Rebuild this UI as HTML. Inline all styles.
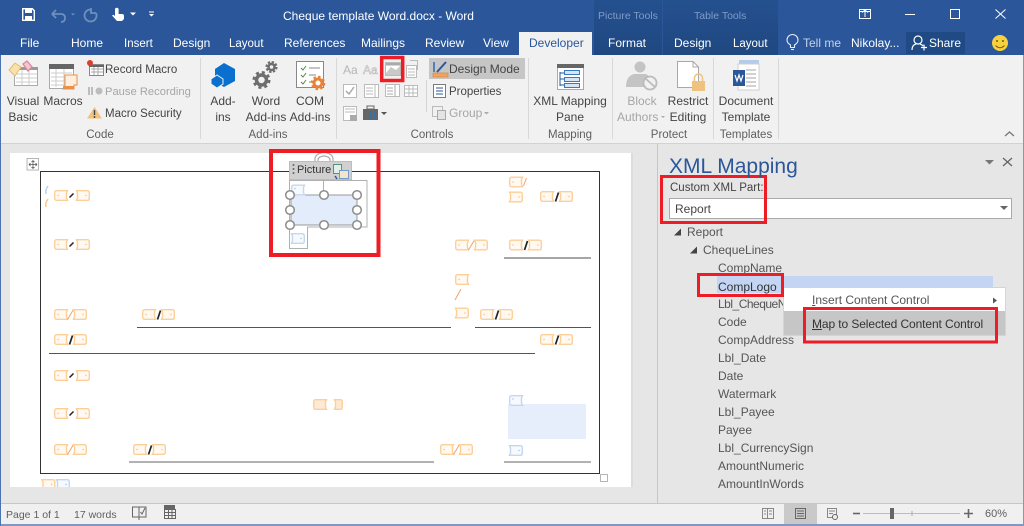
<!DOCTYPE html>
<html><head><meta charset="utf-8"><style>
html,body{margin:0;padding:0}
body{width:1024px;height:526px;overflow:hidden;background:#e6e6e6}
#w{position:relative;width:1024px;height:526px;overflow:hidden;background:#e6e6e6;font-family:"Liberation Sans",sans-serif;font-size:12px;color:#444;filter:blur(.35px)}
.b{position:absolute}
.t{position:absolute;white-space:nowrap;line-height:16px}
.w{color:#fff}
.c{text-align:center;transform:translateX(-50%)}
.g{color:#a6a6a6}
.n{color:#5f5f5f}
.s{font-size:11.5px;margin-top:1px}
.tr{color:#555;font-size:12px}
svg{position:absolute;left:0;top:0}
</style></head><body><div id="w">
<div class="b" style="left:0;top:0;width:1024px;height:55px;background:#2b579a"></div>
<div class="b" style="left:594px;top:0;width:68px;height:55px;background:linear-gradient(#25508f,#1f4880)"></div>
<div class="b" style="left:663px;top:0;width:115px;height:55px;background:linear-gradient(#25508f,#1f4880)"></div>
<div class="b" style="left:519px;top:32px;width:73px;height:23px;background:#f1f1f1"></div>
<div class="b" style="left:906px;top:32px;width:59px;height:22px;background:#1f4a84"></div>
<div class="b" style="left:0;top:55px;width:1024px;height:88px;background:#f1f1f1"></div>
<div class="b" style="left:0;top:143px;width:1024px;height:1px;background:#d2d2d2"></div>
<div class="b" style="left:429px;top:58px;width:96px;height:21px;background:#c6c6c6"></div>
<div class="b" style="left:10px;top:153px;width:621px;height:334px;background:#fff"></div>
<div class="b" style="left:631px;top:153px;width:2px;height:334px;background:#dcdcdc"></div>
<div class="b" style="left:657px;top:144px;width:1px;height:359px;background:#c6c6c6"></div>
<div class="b" style="left:508px;top:404px;width:78px;height:35px;background:#e6eefb"></div>
<div class="b" style="left:669px;top:198px;width:341px;height:19px;background:#fff;border:1px solid #ababab"></div>
<div class="b" style="left:717px;top:276px;width:276px;height:17px;background:#c3d5f2"></div>

<div class="t tr" style="left:687px;top:224px">Report</div>
<div class="t tr" style="left:703px;top:242px">ChequeLines</div>
<div class="t tr" style="left:718px;top:260px">CompName</div>
<div class="t tr" style="left:718px;top:279px;color:#333">CompLogo</div>
<div class="t tr" style="left:718px;top:296px;letter-spacing:-.5px">Lbl_ChequeN</div>
<div class="t tr" style="left:718px;top:314px">Code</div>
<div class="t tr" style="left:718px;top:332px">CompAddress</div>
<div class="t tr" style="left:718px;top:350px">Lbl_Date</div>
<div class="t tr" style="left:718px;top:368px">Date</div>
<div class="t tr" style="left:718px;top:386px">Watermark</div>
<div class="t tr" style="left:718px;top:404px">Lbl_Payee</div>
<div class="t tr" style="left:718px;top:422px">Payee</div>
<div class="t tr" style="left:718px;top:440px">Lbl_CurrencySign</div>
<div class="t tr" style="left:718px;top:458px">AmountNumeric</div>
<div class="t tr" style="left:718px;top:476px">AmountInWords</div>

<div class="b" style="left:783px;top:287px;width:223px;height:49px;background:#fff;border:1px solid #d4d4d4;box-sizing:border-box"></div>
<div class="b" style="left:784px;top:311px;width:221px;height:24px;background:#c6c6c6"></div>
<div class="b" style="left:0;top:503px;width:1024px;height:1px;background:#c6c6c6"></div>
<div class="b" style="left:0;top:504px;width:1024px;height:20px;background:#f0f0f0"></div>
<div class="b" style="left:784px;top:504px;width:33px;height:20px;background:#c9c9c9"></div>
<div class="b" style="left:0;top:524px;width:1024px;height:2px;background:#7f99c0"></div>
<div class="b" style="left:0;top:55px;width:1px;height:471px;background:#4a74b0"></div>
<div class="b" style="left:1023px;top:55px;width:1px;height:471px;background:#7f99c0"></div>

<svg width="1024" height="526" viewBox="0 0 1024 526" fill="none">
<defs>
<g id="L"><path d="M2.500 .7H13.500L12.500 3V8L13.500 10.300H2.500Q.7 10.300 .7 8V3Q.7 .7 2.500 .7Z" fill="#fff9f1" stroke="#fccf99" stroke-width="1.400"/><circle cx="4" cy="5.500" r=".7" fill="#f8bd80"/></g>
<g id="R"><path d="M.5 .7H11.500Q13.300 .7 13.300 3V8Q13.300 10.300 11.500 10.300H.5L1.500 8V3Z" fill="#fff9f1" stroke="#fccf99" stroke-width="1.400"/><circle cx="10" cy="5.500" r=".7" fill="#f8bd80"/></g>
<g id="BL"><path d="M2.500 .7H13.500L12.500 3V8L13.500 10.300H2.500Q.7 10.300 .7 8V3Q.7 .7 2.500 .7Z" fill="#f6f9fe" stroke="#c3d7ee" stroke-width="1.400"/><circle cx="4" cy="4" r=".7" fill="#9fbde0"/></g>
<g id="BR"><path d="M.5 .7H11.500Q13.300 .7 13.300 3V8Q13.300 10.300 11.500 10.300H.5L1.500 8V3Z" fill="#f6f9fe" stroke="#c3d7ee" stroke-width="1.400"/><circle cx="10" cy="5.500" r=".7" fill="#9fbde0"/></g>
<g id="P"><use href="#L"/><path d="M15.500 7.500L19.500 3.500" stroke="#222" stroke-width="1.500"/><use href="#R" x="22"/></g>
<g id="D"><use href="#L"/><path d="M15.500 10.500L18.500 1.500" stroke="#222" stroke-width="1.700"/><use href="#R" x="19"/></g>
<g id="O"><use href="#L"/><path d="M13.500 10.500L19.500 .5" stroke="#f3a06c" stroke-width="1"/><use href="#R" x="19"/></g>
<circle id="H" r="4.300" fill="#fff" stroke="#8c8c8c" stroke-width="1.500"/>
</defs>

<!-- QAT -->
<g stroke="#fff" stroke-width="1.400"><path d="M22.700 8.700H32.300L34.300 10.700V20.300H22.700Z"/></g><rect x="25" y="9" width="7" height="4" fill="#fff"/><rect x="25" y="16" width="7" height="4" fill="#fff"/>
<path d="M52 14L56 10M52 14L56 18M52 14H61Q65 14 65 18T61 22" stroke="#6f8fbd" stroke-width="1.800"/><path d="M71 13.500H75L73 15.500Z" fill="#6f8fbd"/>
<path d="M91 9.500A6 6 0 1 0 96 13M91 8V13H96" stroke="#6f8fbd" stroke-width="1.800"/>
<path d="M115 9.500a1.800 1.800 0 0 1 3.600 0V14H122Q124 14 124 16V19L122 21H117L112 15.500L113.500 14.800L115 16Z" fill="#fff"/>
<path d="M130 12.500H136L133 15.500Z" fill="#fff"/>
<path d="M149 12H154" stroke="#fff"/><path d="M149 14H154L151.500 16.500Z" fill="#fff"/>
<!-- window controls -->
<g stroke="#fff" stroke-width="1"><rect x="859.500" y="9.500" width="11" height="9"/><path d="M862 12.500L865 10L868 12.500M865 10V17M859.500 11.500H870.500"/><path d="M905 14.500H915"/><rect x="950.500" y="9.500" width="9" height="9"/><path d="M995.500 9.500L1005.500 18.500M1005.500 9.500L995.500 18.500"/></g>
<!-- bulb -->
<g stroke="#e5ecf6" stroke-width="1.100"><path d="M790.500 47.500V45Q787 43 787 40A5.500 5.500 0 0 1 798 40Q798 43 794.500 45V47.500Z"/><path d="M791 49.500H794"/></g>
<!-- share -->
<g stroke="#fff" stroke-width="1.200"><circle cx="918" cy="40" r="4"/><path d="M912 50Q912 45 916 44M920 44Q922 44.500 923 46M921 47.500H927M924 44.500V50.500"/></g>
<circle cx="1000" cy="43" r="8" fill="#f7d23e"/><circle cx="997" cy="41" r="1" fill="#7a5a10"/><circle cx="1003" cy="41" r="1" fill="#7a5a10"/><path d="M995.500 45.500Q1000 50 1004.500 45.500" stroke="#7a5a10"/>

<!-- Visual Basic -->
<rect x="14.500" y="67.500" width="23" height="18" fill="#fff" stroke="#aaa"/><rect x="14" y="67" width="24" height="3" fill="#999"/>
<path d="M16 74H37M16 78H37M16 82H37M22 70V85M29 70V85" stroke="#ccc"/>
<path d="M9 70L15 63L21 67L15 76Z" fill="#f6e2ac" stroke="#e6bc6b"/><path d="M23 64L27 61L32 67L28 71Z" fill="#f6c4cf" stroke="#d88a9e" stroke-width="1.300"/>
<!-- Macros -->
<rect x="49.500" y="64.500" width="24" height="24" fill="#fff" stroke="#aaa"/><rect x="49" y="64" width="25" height="5" fill="#666"/>
<path d="M51 73H72M51 77H72M51 81H72M51 85H64M56 69V87M64 69V87" stroke="#ccc"/>
<path d="M65 75H77V85H74V89H63L65 85Z" fill="#fdeedd" stroke="#e8914a"/><rect x="63" y="86" width="11" height="3" fill="#e8914a"/>
<!-- Record macro etc -->
<rect x="89.500" y="64.500" width="14" height="11" fill="#fff" stroke="#888"/><path d="M89 66H104" stroke="#666" stroke-width="2"/><path d="M91 69H103M91 72H103M94 67V75M98 67V75" stroke="#aaa"/><circle cx="90" cy="63" r="3" fill="#d9412b"/>
<rect x="88" y="87" width="2" height="8" fill="#bdbdbd"/><rect x="91" y="87" width="2" height="8" fill="#bdbdbd"/><circle cx="99" cy="91" r="3.500" fill="#bdbdbd"/>
<path d="M94.500 107L102 118.500H87Z" fill="#f2c27b"/><path d="M94.500 110V115M94.500 116V118" stroke="#444" stroke-width="1.400"/>
<!-- Add-ins -->
<path d="M224 63L235 69V81L224 87L215 82V69Z" fill="#0b6fd0"/><path d="M217 75L223 79V84L217 88L211 84V79Z" fill="#0b6fd0" stroke="#f1f1f1"/>
<!-- Word add-ins gears -->
<circle cx="261.500" cy="80" r="7.500" stroke="#6e6e6e" stroke-width="3" stroke-dasharray="3 2.900"/><circle cx="261.500" cy="80" r="5" stroke="#6e6e6e" stroke-width="3.500"/>
<circle cx="271.500" cy="67" r="4.800" stroke="#6e6e6e" stroke-width="2.500" stroke-dasharray="2.300 1.470"/><circle cx="271.500" cy="67" r="3" stroke="#6e6e6e" stroke-width="2.500"/>
<!-- COM -->
<rect x="296.500" y="61.500" width="27" height="26" fill="#fff" stroke="#888"/><path d="M301 68L303 70L306 66M301 75L303 77L306 73M301 82L303 84L306 80" stroke="#4d8f3f"/><path d="M309 68H320M309 75H316M309 82H312" stroke="#888"/>
<circle cx="318" cy="83" r="6" stroke="#e8823a" stroke-width="2.500" stroke-dasharray="2.400 2.300"/><circle cx="318" cy="83" r="4" stroke="#e8823a" stroke-width="3"/>
<!-- Controls -->
<text x="343" y="74" font-family="Liberation Sans" font-size="12" fill="#b5b5b5">Aa</text><text x="363" y="74" font-family="Liberation Sans" font-size="12" fill="none" stroke="#bbb" stroke-width=".6">Aa</text>
<rect x="385.500" y="62.500" width="15" height="13" fill="#fff" stroke="#bbb"/><path d="M386 73L391 67L396 70L400 66V75H386Z" fill="#c9c9c9"/><rect x="386" y="63" width="14" height="2.500" fill="#aaa"/>
<rect x="406.500" y="65.500" width="10" height="12" fill="#fff" stroke="#bbb"/><path d="M410 60.500H417.500V70M408 69H415M408 72H415M408 75H415" stroke="#bbb"/>
<rect x="343.500" y="84.500" width="13" height="13" fill="#fff" stroke="#bbb"/><path d="M346 91L349 94L354 87" stroke="#aaa" stroke-width="1.500"/>
<rect x="364.500" y="84.500" width="14" height="13" fill="#fff" stroke="#bbb"/><path d="M366 88H373M366 91H373M366 94H373M375 85V97" stroke="#bbb"/>
<rect x="385.500" y="84.500" width="14" height="12" fill="#fff" stroke="#bbb"/><path d="M387 88H393M387 91H393M387 94H393M395 85V96" stroke="#aaa"/>
<rect x="404.500" y="85.500" width="13" height="11" fill="#fff" stroke="#bbb"/><path d="M405 89H417M405 93H417M409 86V96M413 86V96" stroke="#bbb"/>
<rect x="343.500" y="106.500" width="13" height="14" fill="#fff" stroke="#bbb"/><path d="M345 109H355M345 112H355" stroke="#bbb"/><rect x="350" y="115" width="7" height="6" fill="#aaa"/>
<rect x="363" y="109" width="15" height="11" fill="#666"/><rect x="367" y="106" width="7" height="3" stroke="#666"/><path d="M371 111V120M375 111V120" stroke="#2d72b8" stroke-width="1.500"/>
<path d="M381 112H387L384 115Z" fill="#555"/>
<line x1="426.500" y1="80" x2="426.500" y2="112" stroke="#d5d5d5"/>
<path d="M434 62V72" stroke="#2b6cb0" stroke-width="1.500"/><path d="M437 72L446 62" stroke="#2b579a" stroke-width="2"/><rect x="433" y="73" width="15" height="4" fill="#f0a35e" stroke="#d98236" stroke-width=".6"/>
<rect x="433.500" y="84.500" width="12" height="13" fill="#fff" stroke="#7b7b7b"/><path d="M436 88H443M436 91H443M436 94H443" stroke="#2b579a"/>
<rect x="432.500" y="106.500" width="10" height="10" stroke="#bbb"/><rect x="437.500" y="110.500" width="8" height="9" fill="#e4e4e4" stroke="#aaa"/>
<path d="M484 112H489L486.500 114.500Z" fill="#aaa"/>
<!-- XML mapping icon -->
<rect x="557.500" y="64.500" width="26" height="25" fill="#fff" stroke="#aaa"/><rect x="557" y="64" width="27" height="4" fill="#666"/>
<path d="M560 72V86M560 73H564M560 79H564M560 85H564" stroke="#2b579a"/><rect x="564.500" y="70.500" width="15" height="4" fill="#d5e5f7" stroke="#3b78c2"/><rect x="564.500" y="77.500" width="15" height="4" fill="#d5e5f7" stroke="#3b78c2"/><rect x="564.500" y="83.500" width="15" height="4" fill="#d5e5f7" stroke="#3b78c2"/>
<!-- Block authors -->
<circle cx="640" cy="67" r="5.500" fill="#c4c4c4"/><path d="M626 87Q626 76 634 74H646Q650 76 650 80L644 87Z" fill="#c4c4c4"/><circle cx="650" cy="83" r="6.500" fill="#f1f1f1" stroke="#bbb" stroke-width="1.800"/><path d="M646 79L655 87" stroke="#bbb" stroke-width="1.800"/>
<path d="M661 116H665L663 118Z" fill="#aaa"/>
<!-- Restrict -->
<path d="M677.500 61.500H693L698.500 67V87.500H677.500Z" fill="#fff" stroke="#a8a8a8"/><path d="M693 61.500V67H698.500" stroke="#a8a8a8"/><rect x="692" y="81" width="13" height="10" fill="#eec27f"/><path d="M694.500 81V78A4 4 0 0 1 702.500 78V81" stroke="#eec27f" stroke-width="1.500"/>
<!-- Doc template -->
<rect x="739" y="60" width="20" height="5" fill="#b4cbec"/><rect x="738" y="64" width="21" height="26" fill="#fff" stroke="#cfcfcf"/><path d="M746 70H756M746 74H756M746 78H756M746 82H756M746 86H756" stroke="#a6a6a6"/><rect x="733" y="70" width="12" height="16" fill="#2b579a"/><path d="M735 75L737 81L739 75L741 81L743 75" stroke="#fff" stroke-width="1.200"/>
<path d="M1005 136L1009.500 132L1014 136" stroke="#777" stroke-width="1.300"/>
<!-- ribbon separators -->
<g stroke="#d8d8d8"><path d="M200.500 58V139M336.500 58V139M528.500 58V139M612.500 58V139M713.500 58V139M778.500 58V139"/></g>

<!-- Table -->
<rect x="27" y="158.500" width="11.500" height="11.500" fill="#fff" stroke="#b5b5b5"/><path d="M33 160.500V168.500M29 164.500H37M33 160.500L31.500 162M33 160.500L34.500 162M33 168.500L31.500 167M33 168.500L34.500 167M29 164.500L30.500 163M29 164.500L30.500 166M37 164.500L35.500 163M37 164.500L35.500 166" stroke="#555" stroke-width=".8"/>
<rect x="40.500" y="171.500" width="559" height="302" stroke="#333"/>
<rect x="600.500" y="474.500" width="7" height="7" fill="#fff" stroke="#b5b5b5"/>
<g stroke="#555"><path d="M504 258H591" stroke="#888" stroke-width="1.500"/><path d="M137 327.500H451M475 327.500H591M49 353.500H535"/><path d="M129 462H434M504 462H591" stroke="#999" stroke-width="1.600"/></g>
<!-- content controls -->
<use href="#P" x="54" y="190"/><use href="#P" x="54" y="239"/><use href="#O" x="54" y="309"/><use href="#D" x="142" y="309"/>
<use href="#D" x="54" y="334"/><use href="#P" x="54" y="370"/><use href="#P" x="54" y="408"/><use href="#O" x="54" y="444"/><use href="#D" x="133" y="444"/>
<use href="#L" x="509" y="176.500"/><path d="M523.500 186L526.500 178" stroke="#f3a06c"/><use href="#R" x="509" y="191.500"/>
<use href="#D" x="540" y="191"/><use href="#O" x="455" y="239.500"/><use href="#D" x="509" y="239.500"/>
<use href="#L" x="455" y="274"/><path d="M455 300L461 289" stroke="#f3a06c"/><use href="#R" x="455" y="307.500"/>
<use href="#D" x="480" y="309"/><use href="#D" x="540" y="334"/>
<path d="M315.500 399.700H326.500L325.500 402V407L326.500 409.300H315.500Q313.700 409.300 313.700 407V402Q313.700 399.700 315.500 399.700Z" fill="#fde9d6" stroke="#fccf99" stroke-width="1.400"/>
<path d="M334.500 399.700H340.500Q342.300 399.700 342.300 402V407Q342.300 409.300 340.500 409.300H334.500L335.500 407V402Z" fill="#fde9d6" stroke="#fccf99" stroke-width="1.400"/>
<use href="#O" x="440" y="444"/>
<use href="#BL" x="509" y="395"/><use href="#BR" x="509" y="445"/>
<path d="M48 186Q45 190 46 194" stroke="#bcd2ec" stroke-width="1.500"/><path d="M48 199Q45 203 46 207" stroke="#fbc98b" stroke-width="1.500"/>
<use href="#R" x="41.500" y="479"/><use href="#BR" x="56" y="479"/>
<rect x="10" y="487" width="621" height="16" fill="#e6e6e6"/>
<!-- Picture control -->
<path d="M289.500 180.500H367V227H307.500V248.500H289.500Z" fill="#fff" stroke="#b0b0b0"/><path d="M323.500 180V195" stroke="#b0b0b0"/>
<rect x="291" y="195" width="66" height="30" fill="#e3ecfa" stroke="#9a9a9a"/>
<use href="#BL" x="291" y="184.500"/><use href="#BR" x="291" y="233"/>
<path d="M315 161V159A9 6.500 0 0 1 333 159V161M318 161V160A6 4 0 0 1 330 160V161" stroke="#aaa" stroke-width="1.200" fill="#fff"/>
<rect x="289.500" y="161.500" width="62" height="18" fill="#d0d0d0" stroke="#bdbdbd"/>
<g fill="#666"><circle cx="293.500" cy="165" r="1"/><circle cx="293.500" cy="169" r="1"/><circle cx="293.500" cy="173" r="1"/></g>
<rect x="333.500" y="164.500" width="8" height="9" fill="#dff0e8" stroke="#5c8f80"/><rect x="339.500" y="170.500" width="9" height="8" fill="#f5e5cc" stroke="#6f9ccc"/><path d="M335 176L337 179" stroke="#2b579a" stroke-width="1.500"/>
<use href="#H" x="290" y="195"/><use href="#H" x="324" y="195"/><use href="#H" x="357" y="195"/><use href="#H" x="290" y="210"/><use href="#H" x="357" y="210"/><use href="#H" x="290" y="225"/><use href="#H" x="324" y="225"/><use href="#H" x="357" y="225"/>
<!-- Pane icons -->
<path d="M985 160H994L989.500 164.500Z" fill="#777"/><path d="M1003 158L1012 166M1012 158L1003 166" stroke="#666" stroke-width="1.300"/>
<path d="M1000 206H1008L1004 210Z" fill="#666"/>
<path d="M674 235.500H681V228.500Z" fill="#444"/><path d="M690 253.500H697V246.500Z" fill="#444"/>
<path d="M993 297.500L997 300.500L993 303.500Z" fill="#555"/>
<!-- Status bar icons -->
<path d="M132.500 507V517H139V507ZM139 507H146V517H139M139 517V520" stroke="#666"/><path d="M140.500 512L142 514L145 508" stroke="#666"/>
<rect x="164.500" y="509.500" width="11" height="9" fill="#f0f0f0" stroke="#666"/><rect x="164" y="505" width="11" height="4" fill="#666"/><path d="M165 512.500H175M165 515.500H175M168.500 510V518M172 510V518" stroke="#666"/>
<g stroke="#888"><path d="M762.500 508.500H767.500V518.500H762.500ZM767.500 508.500H773.500V518.500H767.500Z"/><path d="M764 511H766M764 514H766M769 511H772M769 514H772"/></g>
<rect x="795.500" y="508.500" width="10" height="10" stroke="#666"/><path d="M797 511H804M797 513.500H804M797 516H804" stroke="#666"/>
<rect x="827.500" y="508.500" width="9" height="9" stroke="#888"/><path d="M829 511H835M829 513.500H833" stroke="#888"/><circle cx="835" cy="517" r="2.500" stroke="#666" fill="#f0f0f0"/>
<path d="M853 513.500H860" stroke="#666" stroke-width="1.600"/><path d="M863 513.500H960" stroke="#bdbdbd"/><path d="M912 511V516" stroke="#aaa"/>
<rect x="890" y="508" width="4" height="11" fill="#666"/><path d="M964 513.500H973M968.500 509V518" stroke="#666" stroke-width="1.600"/>
<!-- Red rectangles -->
<g stroke="#ee1c25"><rect x="271" y="151" width="107.500" height="104" stroke-width="4"/><rect x="381.700" y="57.500" width="21" height="23" stroke-width="3.500"/><rect x="661.500" y="176.500" width="104" height="46" stroke-width="3"/><rect x="698.500" y="274.500" width="84" height="21" stroke-width="3"/><rect x="804.500" y="308.500" width="192" height="33.500" stroke-width="3"/></g>
</svg>

<div class="t w" style="left:283px;top:8px;font-size:12px">Cheque template Word.docx - Word</div>
<div class="t" style="left:598px;top:8px;font-size:10.500px;color:#7f9cc8">Picture Tools</div>
<div class="t" style="left:694px;top:8px;font-size:10.500px;color:#7f9cc8">Table Tools</div>
<div class="t w" style="left:20px;top:35px">File</div>
<div class="t w" style="left:71px;top:35px">Home</div>
<div class="t w" style="left:124px;top:36px;font-size:11.500px">Insert</div>
<div class="t w" style="left:173px;top:35px">Design</div>
<div class="t w" style="left:229px;top:36px;font-size:11.500px">Layout</div>
<div class="t w" style="left:284px;top:35px">References</div>
<div class="t w" style="left:361px;top:35px">Mailings</div>
<div class="t w" style="left:425px;top:35px">Review</div>
<div class="t w" style="left:483px;top:35px">View</div>
<div class="t" style="left:529px;top:35px;color:#2b579a">Developer</div>
<div class="t w" style="left:608px;top:35px">Format</div>
<div class="t w" style="left:674px;top:35px">Design</div>
<div class="t w" style="left:733px;top:36px;font-size:11.500px">Layout</div>
<div class="t" style="left:803px;top:35px;color:#c3d2e8">Tell me</div>
<div class="t w" style="left:851px;top:35px">Nikolay...</div>
<div class="t w" style="left:929px;top:35px">Share</div>

<div class="t c" style="left:23px;top:93px">Visual</div><div class="t c" style="left:23px;top:109px">Basic</div>
<div class="t c" style="left:63px;top:93px">Macros</div>
<div class="t s" style="left:105px;top:61px">Record Macro</div>
<div class="t g s" style="left:105px;top:83px;font-size:11.200px">Pause Recording</div>
<div class="t s" style="left:105px;top:105px">Macro Security</div>
<div class="t n c s" style="left:100px;top:126px">Code</div>
<div class="t c" style="left:223px;top:93px">Add-</div><div class="t c" style="left:223px;top:109px">ins</div>
<div class="t c" style="left:266px;top:93px">Word</div><div class="t c" style="left:266px;top:109px">Add-ins</div>
<div class="t c" style="left:310px;top:93px">COM</div><div class="t c" style="left:310px;top:109px">Add-ins</div>
<div class="t n c s" style="left:268px;top:126px">Add-ins</div>
<div class="t" style="left:449px;top:61px">Design Mode</div>
<div class="t s" style="left:449px;top:83px">Properties</div>
<div class="t g" style="left:449px;top:105px">Group</div>
<div class="t n c s" style="left:432px;top:126px">Controls</div>
<div class="t c" style="left:570px;top:93px">XML Mapping</div><div class="t c" style="left:570px;top:109px">Pane</div>
<div class="t n c s" style="left:570px;top:126px">Mapping</div>
<div class="t g c" style="left:642px;top:93px">Block</div><div class="t g" style="left:617px;top:109px">Authors</div>
<div class="t c" style="left:688px;top:93px">Restrict</div><div class="t c" style="left:688px;top:109px">Editing</div>
<div class="t n c s" style="left:669px;top:126px">Protect</div>
<div class="t c" style="left:746px;top:93px">Document</div><div class="t c" style="left:746px;top:109px">Template</div>
<div class="t n c s" style="left:746px;top:126px">Templates</div>

<div class="t" style="left:297px;top:162px;font-size:11px;color:#333">Picture</div>

<div class="t" style="left:669px;top:153px;font-size:21px;line-height:28px;color:#2b579a">XML Mapping</div>
<div class="t s" style="left:670px;top:179px;color:#444">Custom XML Part:</div>
<div class="t" style="left:675px;top:201px;color:#444">Report</div>
<div class="t" style="left:812px;top:292px;color:#555"><u>I</u>nsert Content Control</div>
<div class="t" style="left:812px;top:316px;color:#333;letter-spacing:-.1px"><u>M</u>ap to Selected Content Control</div>
<div class="t n" style="left:6px;top:507px;font-size:10.500px">Page 1 of 1</div>
<div class="t n" style="left:74px;top:507px;font-size:10.500px">17 words</div>
<div class="t n" style="left:985px;top:506px;font-size:11px">60%</div>
</div></body></html>
